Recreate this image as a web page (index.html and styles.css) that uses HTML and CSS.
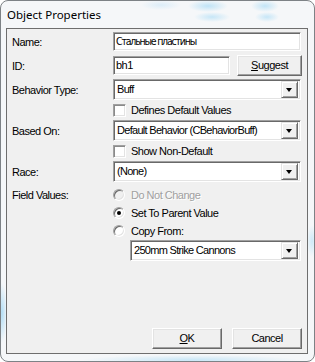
FILE: index.html
```html
<!DOCTYPE html>
<html>
  <head>
    <title>Object Properties</title>
    <link rel="stylesheet" href="styles.css">
  </head>
  <body>
    <div class="window">
      <div class="titlebar">Object Properties</div>

      <div class="client">
        <div class="row row-name">
          <span class="label">Name:</span>
          <div class="edit edit-wide"><span class="cyr">Стальные пластины</span></div>
        </div>

        <div class="row row-id">
          <span class="label">ID:</span>
          <div class="edit edit-id">bh1</div>
          <div class="btn btn-suggest"><u>S</u>uggest</div>
        </div>

        <div class="row row-select">
          <span class="label">Behavior Type:</span>
          <div class="combo">
            <span class="combo-text">Buff</span>
            <span class="combo-arrow"></span>
          </div>
        </div>

        <div class="row row-check">
          <span class="label"></span>
          <span class="check"></span>
          <span>Defines Default Values</span>
        </div>

        <div class="row row-select">
          <span class="label">Based On:</span>
          <div class="combo">
            <span class="combo-text">Default Behavior (CBehaviorBuff)</span>
            <span class="combo-arrow"></span>
          </div>
        </div>

        <div class="row row-check">
          <span class="label"></span>
          <span class="check"></span>
          <span>Show Non-Default</span>
        </div>

        <div class="row row-select row-race">
          <span class="label">Race:</span>
          <div class="combo">
            <span class="combo-text">(None)</span>
            <span class="combo-arrow"></span>
          </div>
        </div>

        <div class="row row-radio row-first">
          <span class="label">Field Values:</span>
          <span class="radio disabled"></span>
          <span class="text-disabled">Do Not Change</span>
        </div>

        <div class="row row-radio">
          <span class="label"></span>
          <span class="radio checked"></span>
          <span>Set To Parent Value</span>
        </div>

        <div class="row row-radio">
          <span class="label"></span>
          <span class="radio"></span>
          <span>Copy From:</span>
        </div>

        <div class="row row-select">
          <span class="label"></span>
          <div class="combo combo-copy">
            <span class="combo-text">250mm Strike Cannons</span>
            <span class="combo-arrow"></span>
          </div>
        </div>

        <div class="buttons">
          <div class="btn btn-dialog"><u>O</u>K</div>
          <div class="btn btn-dialog">Cancel</div>
        </div>
      </div>
    </div>
  </body>
</html>
```

FILE: styles.css
```css
body {
  margin: 0;
  font-family: "Liberation Sans", Arial, sans-serif;
  font-size: 11px;
  letter-spacing: -0.5px;
  color: #000;
  background: #fff;
}
.window {
  box-sizing: border-box;
  width: 315px;
  height: 362px;
  border: 1px solid #7d8286;
  border-radius: 8px;
  background-color: #f5f7f9;
  background-image:
    radial-gradient(ellipse 20px 6px at 207px 5px, #bfe3f6, transparent),
    radial-gradient(ellipse 18px 5px at 211px 16px, #c6e6f7, transparent),
    radial-gradient(ellipse 14px 6px at 264px 5px, #c2e4f6, transparent),
    radial-gradient(ellipse 12px 5px at 266px 16px, #c6e6f7, transparent),
    radial-gradient(ellipse 20px 5px at 160px 4px, #dcedf8, transparent),
    radial-gradient(ellipse 5px 30px at 1px 312px, #b3def5, transparent),
    radial-gradient(ellipse 110px 5px at 190px 359px, #c9e7f7, transparent),
    radial-gradient(ellipse 5px 16px at 311px 240px, #cde9f8, transparent);
}
.titlebar {
  height: 27px;
  padding-left: 6px;
  line-height: 27px;
  font-family: "Noto Sans", "Open Sans", sans-serif;
  font-size: 11.5px;
  letter-spacing: 0;
  color: #000;
}
.client {
  box-sizing: border-box;
  display: flex;
  flex-direction: column;
  width: 302px;
  height: 326px;
  margin-left: 5px;
  padding: 3px 5px 4px 4px;
  border: 1px solid #6e6e6e;
  background-color: #f0f0f0;
}
.row {
  display: flex;
  align-items: center;
}
.label {
  width: 102px;
  flex-shrink: 0;
  padding-left: 1px;
  box-sizing: border-box;
}
.row-name {
  height: 19px;
}
.row-id {
  height: 21px;
  margin-top: 4px;
}
.row-select {
  height: 21px;
  margin-top: 3px;
}
.row-check {
  height: 20px;
}
.row-check + .row-select {
  margin-top: 0;
}
.row-race {
  margin-top: 2px;
}
.row-radio {
  height: 18px;
}
.row-first {
  margin-top: 4px;
}
.row-radio + .row-select {
  margin-top: 0;
}

/* sunken edit / combo boxes */
.edit,
.combo {
  box-sizing: border-box;
  height: 19px;
  padding-left: 2px;
  line-height: 15px;
  background-color: #fff;
  border: 1px solid;
  border-color: #a0a0a0 #fff #fff #a0a0a0;
  box-shadow: inset 1px 1px #696969, inset -1px -1px #e3e3e3;
  white-space: nowrap;
  overflow: hidden;
}
.edit {
  padding-top: 1px;
}
.cyr {
  font-family: "DejaVu Sans", sans-serif;
  font-stretch: condensed;
  font-size: 10.5px;
  letter-spacing: -1.2px;
}
.edit-wide {
  width: 188px;
}
.edit-id {
  width: 117px;
}
.combo {
  display: flex;
  align-items: center;
  width: 188px;
  height: 21px;
  padding: 0 2px 0 2px;
}
.combo-copy {
  width: 171px;
  margin-left: 17px;
}
.combo-text {
  flex: 1;
  padding-left: 1px;
  letter-spacing: -0.7px;
}
.combo-arrow {
  position: relative;
  box-sizing: border-box;
  width: 17px;
  height: 17px;
  background-color: #f0f0f0;
  border: 1px solid;
  border-color: #e3e3e3 #696969 #696969 #e3e3e3;
  box-shadow: inset 1px 1px #fff, inset -1px -1px #a0a0a0;
}
.combo-arrow::after {
  content: "";
  position: absolute;
  left: 4px;
  top: 6px;
  border-left: 3.5px solid transparent;
  border-right: 3.5px solid transparent;
  border-top: 4px solid #000;
}

/* raised push buttons */
.btn {
  box-sizing: border-box;
  height: 21px;
  line-height: 18px;
  text-align: center;
  background-color: #f0f0f0;
  border: 1px solid;
  border-color: #fff #696969 #696969 #fff;
  box-shadow: inset -1px -1px #a0a0a0, inset 1px 1px #e3e3e3;
}
.btn-suggest {
  width: 65px;
  margin-left: 7px;
}
.buttons {
  display: flex;
  justify-content: flex-end;
  gap: 10px;
  margin-top: auto;
}
.btn-dialog {
  width: 70px;
}

/* check boxes and radio buttons */
.check {
  box-sizing: border-box;
  width: 13px;
  height: 13px;
  margin-right: 5px;
  background-color: #fff;
  border: 1px solid;
  border-color: #a0a0a0 #fff #fff #a0a0a0;
  box-shadow: inset 1px 1px #8a8a8a, inset -1px -1px #e3e3e3;
}
.radio {
  position: relative;
  box-sizing: border-box;
  width: 12px;
  height: 12px;
  margin-right: 6px;
  border-radius: 50%;
  background-color: #fff;
  border: 1px solid;
  border-color: #a0a0a0 #fff #fff #a0a0a0;
  box-shadow: inset 1px 1px #696969, inset -1px -1px #e3e3e3;
}
.radio.disabled {
  background-color: #f0f0f0;
}
.radio.checked::after {
  content: "";
  position: absolute;
  left: 3px;
  top: 3px;
  width: 4px;
  height: 4px;
  border-radius: 50%;
  background-color: #000;
}
.text-disabled {
  color: #a0a0a0;
  text-shadow: 1px 1px #fff;
}
```
